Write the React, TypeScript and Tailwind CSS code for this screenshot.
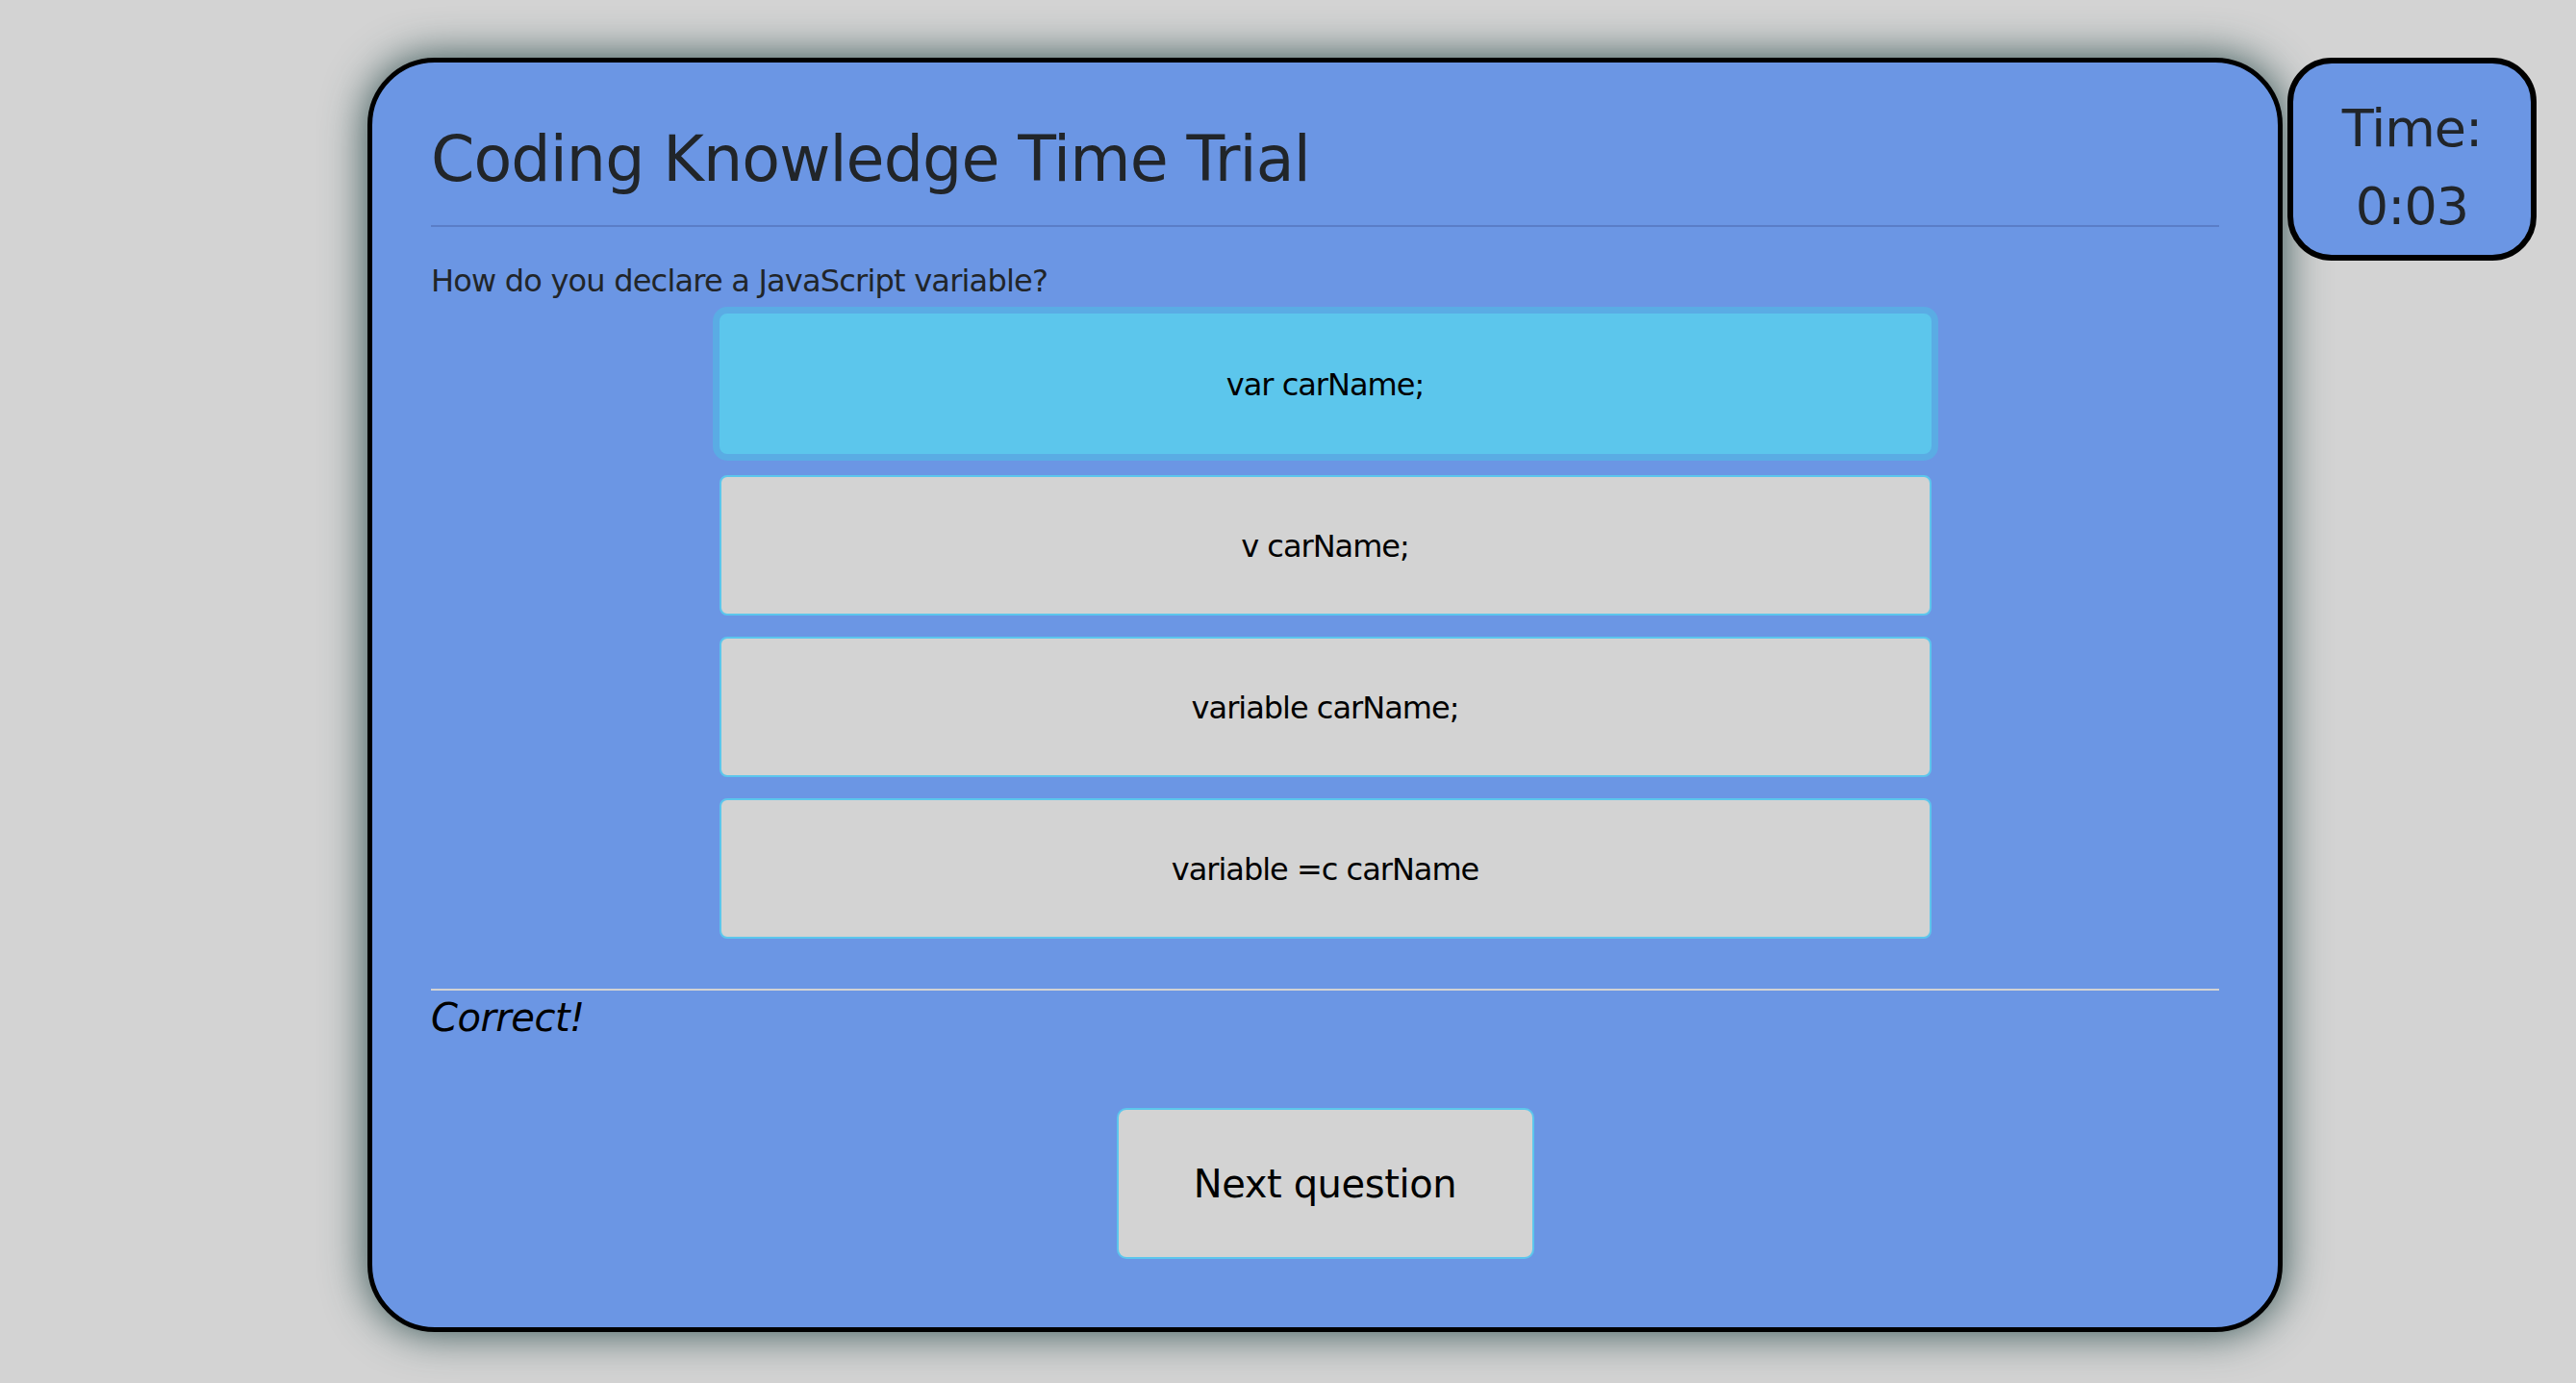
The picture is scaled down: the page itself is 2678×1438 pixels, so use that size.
const answers = ["var carName;", "v carName;", "variable carName;", "variable =c carName"];

const App = () => {
  return (
    <div className="min-h-screen w-full bg-[#d3d3d3] pt-[60px] pl-[382px] flex items-start gap-[5px] font-['DejaVu_Sans',sans-serif]">
      {/* Quiz card */}
      <div className="w-[1991px] h-[1325px] shrink-0 rounded-[70px] border-[5px] border-black bg-[#6b96e4] shadow-[0_0_45px_#2f4f4f] px-[61px] pt-[62px]">
        <h1 className="text-[65px] leading-[1.2] text-[#212529] tracking-[-0.9px]">Coding Knowledge Time Trial</h1>
        <div className="mt-[29px] h-[2px] bg-[#5a7dc7]" />
        <p className="mt-[32px] text-[32px] leading-[1.5] text-[#212529] tracking-[-0.8px]">
          How do you declare a JavaScript variable?
        </p>

        <div className="mt-[10px] flex flex-col items-center gap-[22px]">
          {answers.map((a, i) => (
            <button
              key={a}
              className={
                i === 0
                  ? "w-[1260px] h-[146px] rounded-[8px] border-2 border-[#5cc6ec] bg-[#5cc6ec] shadow-[0_0_0_7px_#5aace4] pt-[2px] text-[32px] text-black tracking-[-1px]"
                  : "w-[1260px] h-[146px] rounded-[8px] border-2 border-[#5cc6ec] bg-[#d3d3d3] pt-[2px] text-[32px] text-black tracking-[-1px]"
              }
            >
              {a}
            </button>
          ))}
        </div>

        <div className="mt-[52px] h-[2px] bg-[#d3d3d3]" />
        <p className="text-[40px] leading-[1.4] italic text-black tracking-[-0.5px]">Correct!</p>

        <div className="mt-[66px] flex justify-center">
          <button className="w-[434px] h-[157px] rounded-[10px] border-2 border-[#5cc6ec] bg-[#d3d3d3] text-[40px] text-black tracking-[-0.4px]">
            Next question
          </button>
        </div>
      </div>

      {/* Timer */}
      <div className="w-[259px] h-[211px] shrink-0 rounded-[46px] border-[6px] border-black bg-[#6b96e4] pt-[16px] flex flex-col items-center justify-center text-[54px] leading-[81px] text-[#212529] tracking-[-1px]">
        <span>Time:</span>
        <span>0:03</span>
      </div>
    </div>
  );
};

export default App;
